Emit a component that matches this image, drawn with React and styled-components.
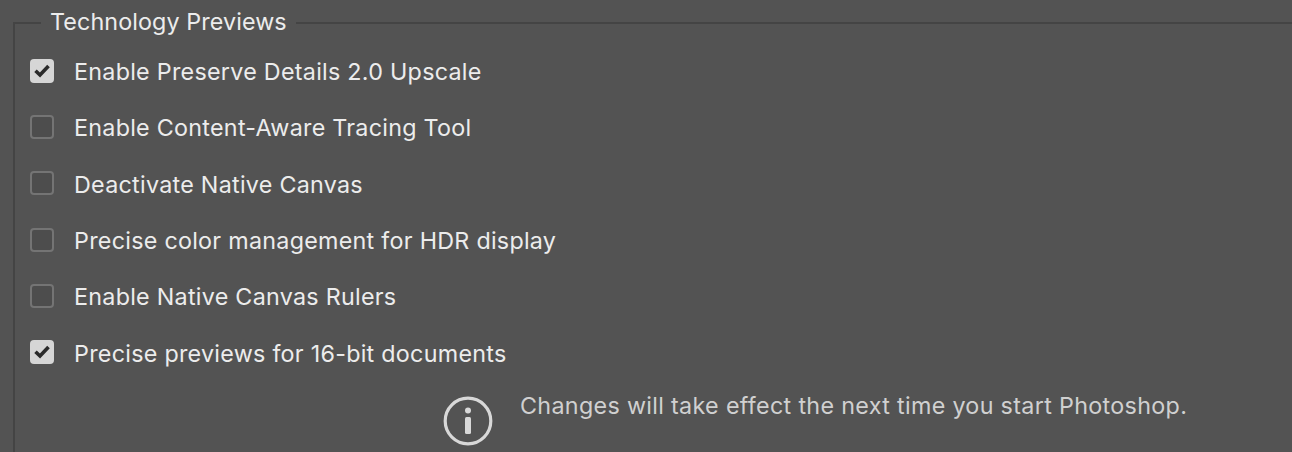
import React from "react";
import styled, { createGlobalStyle } from "styled-components";

const Global = createGlobalStyle`
  html, body { margin: 0; padding: 0; background: #535353; }
  body { width: 1292px; height: 452px; overflow: hidden; }
`;

const Frame = styled.section`
  box-sizing: border-box;
  margin: 22px 0 0 13px;
  height: 430px;
  border-top: 2px solid #444444;
  border-left: 2px solid #444444;
  padding: 0 0 0 15px;
  display: flex;
  flex-direction: column;
  font-family: Inter, "Liberation Sans", sans-serif;
  color: #ececec;
  font-size: 23.3px;
  letter-spacing: 0.27px;
`;

const Legend = styled.h2`
  align-self: flex-start;
  margin: -15.5px 0 0 11px;
  padding: 0 9px 0 9px;
  height: 26px;
  font: inherit;
  letter-spacing: 0.1px;
  line-height: 26px;
  background: #535353;
  white-space: nowrap;
`;

const List = styled.div`
  margin-top: 24.2px;
  display: flex;
  flex-direction: column;
  gap: 32.3px;
`;

const Row = styled.label`
  display: flex;
  align-items: center;
  height: 24px;
  gap: 20px;
  white-space: nowrap;
`;

const RowText = styled.span`
  padding-top: 2px;
`;

const Box = styled.span`
  box-sizing: border-box;
  width: 24px;
  height: 24px;
  flex: none;
  border-radius: 4px;
  display: flex;
  align-items: center;
  justify-content: center;
  background: ${(p) => (p.$checked ? "#d6d6d6" : "#4d4d4d")};
  border: ${(p) => (p.$checked ? "0" : "2px solid #747474")};
`;

const Notice = styled.div`
  display: flex;
  align-items: flex-start;
  margin: 32.3px 0 0 413px;
  gap: 27px;
  color: #d0d0d0;
  white-space: nowrap;
  letter-spacing: 0.32px;
`;

const NoticeText = styled.span`
  line-height: 26px;
  margin-top: -3px;
`;

const Check = () => (
  <svg width="18" height="14" viewBox="0 0 18 14" aria-hidden="true">
    <path d="M2.5 6.8 L7 11 L15.5 2" fill="none" stroke="#2b2b2b" strokeWidth="3.6" />
  </svg>
);

const InfoIcon = () => (
  <svg width="50" height="50" viewBox="0 0 50 50" aria-hidden="true">
    <circle cx="25" cy="25" r="22.8" fill="none" stroke="#d8d8d8" strokeWidth="3.2" />
    <circle cx="25" cy="14.5" r="3" fill="#d8d8d8" />
    <rect x="22" y="21" width="6" height="17" rx="1.5" fill="#d8d8d8" />
  </svg>
);

const items = [
  ["Enable Preserve Details 2.0 Upscale", true],
  ["Enable Content-Aware Tracing Tool", false],
  ["Deactivate Native Canvas", false],
  ["Precise color management for HDR display", false],
  ["Enable Native Canvas Rulers", false],
  ["Precise previews for 16-bit documents", true],
];

export default function App() {
  return (
    <>
      <Global />
      <Frame>
        <Legend>Technology Previews</Legend>
        <List>
          {items.map(([label, checked]) => (
            <Row key={label}>
              <Box $checked={checked}>{checked && <Check />}</Box>
              <RowText>{label}</RowText>
            </Row>
          ))}
        </List>
        <Notice>
          <InfoIcon />
          <NoticeText>Changes will take effect the next time you start Photoshop.</NoticeText>
        </Notice>
      </Frame>
    </>
  );
}
